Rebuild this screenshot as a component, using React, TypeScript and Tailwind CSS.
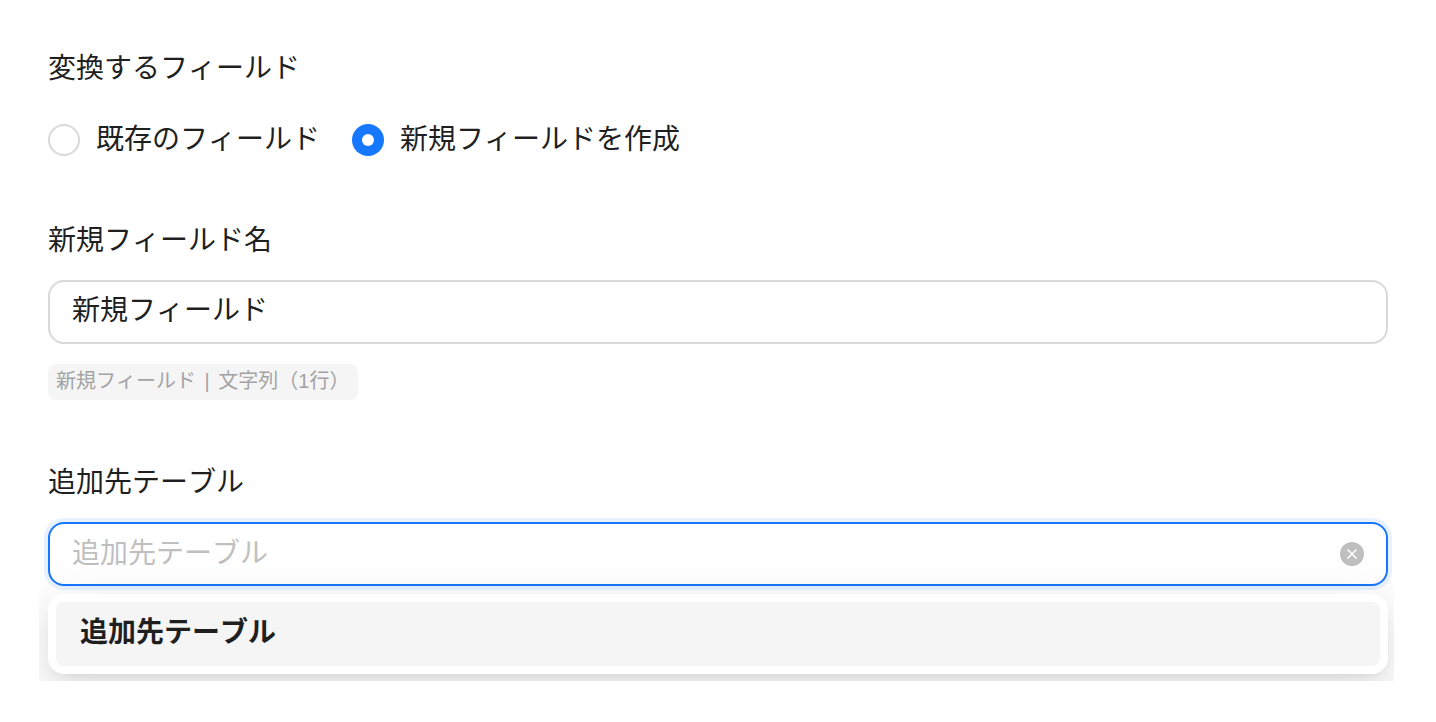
import { X } from 'lucide-react';

const FONT = "font-['Liberation_Sans','Noto_Sans_CJK_JP',sans-serif]";

function Radio({ checked, label }: { checked?: boolean; label: string }) {
  return (
    <label className="flex items-center gap-4">
      {checked ? (
        <span className="flex h-8 w-8 items-center justify-center rounded-full bg-[#1677ff]">
          <span className="h-3 w-3 rounded-full bg-white" />
        </span>
      ) : (
        <span className="h-8 w-8 rounded-full border-2 border-[#d9d9d9] bg-white" />
      )}
      <span className="text-[28px] leading-10 text-[#1f1f1f]">{label}</span>
    </label>
  );
}

function FieldLabel({ children }: { children: React.ReactNode }) {
  return <p className="h-10 text-[28px] leading-[42px] text-[#1f1f1f]">{children}</p>;
}

export default function App() {
  return (
    <div className={`${FONT} h-[722px] w-[1436px] overflow-hidden bg-white px-12 pt-12 [font-kerning:none]`}>
      {/* Target field */}
      <FieldLabel>変換するフィールド</FieldLabel>
      <div className="mt-[36px] flex h-8 items-center gap-8">
        <Radio label="既存のフィールド" />
        <Radio checked label="新規フィールドを作成" />
      </div>

      {/* New field name */}
      <div className="mt-16">
        <FieldLabel>新規フィールド名</FieldLabel>
        <div className="mt-5 flex h-16 items-center rounded-2xl border-2 border-[#d9d9d9] bg-white px-[22px] text-[28px] text-[#1f1f1f]">
          <span className="-mt-[2px]">新規フィールド</span>
        </div>
        <div className="mt-5 inline-flex h-9 w-[310px] items-center rounded-lg bg-[#f5f5f5] px-2 text-[20px] text-[#a3a3a3]">
          <span className="-mt-[2px]">
            新規フィールド<span className="mx-[3px]"> | </span>文字列（1行）
          </span>
        </div>
      </div>

      {/* Destination table */}
      <div className="mt-[62px]">
        <FieldLabel>追加先テーブル</FieldLabel>
        <div className="relative mt-5">
          <div className="flex h-16 items-center justify-between rounded-2xl border-2 border-[#1677ff] bg-white pl-[22px] pr-[22px] shadow-[0_0_0_4px_rgba(22,119,255,0.1)]">
            <span className="text-[28px] text-[#bfbfbf]">追加先テーブル</span>
            <span className="flex h-6 w-6 items-center justify-center rounded-full bg-[#bfbfbf]">
              <X className="h-4 w-4 text-white" strokeWidth={2.5} />
            </span>
          </div>

          {/* Dropdown, its shadow is clipped by the popup container */}
          <div className="absolute -left-[9px] -right-[6px] top-0 h-[159px] overflow-hidden">
            <div className="absolute left-[9px] right-[6px] top-[72px] rounded-2xl bg-white p-2 shadow-[0_12px_32px_0_rgba(0,0,0,0.08),0_6px_12px_-8px_rgba(0,0,0,0.12),0_18px_56px_16px_rgba(0,0,0,0.05)]">
              <div className="flex h-16 items-center rounded-lg bg-[#f5f5f5] px-6 text-[28px] font-bold text-[#1f1f1f]">
                <span className="-mt-[2px]">追加先テーブル</span>
              </div>
            </div>
          </div>
        </div>
      </div>
    </div>
  );
}
